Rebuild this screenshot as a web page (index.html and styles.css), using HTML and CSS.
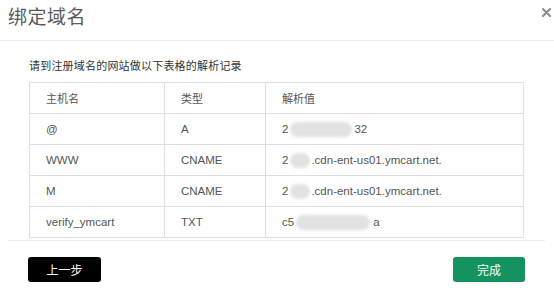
FILE: index.html
```html
<!DOCTYPE html>
<html lang="zh">
<head>
<meta charset="utf-8">
<link rel="stylesheet" href="styles.css">
</head>
<body>
<div class="dialog">
  <div class="header">
    <h1 class="title">绑定域名</h1>
    <svg class="close" width="9" height="9" viewBox="0 0 9 9"><path d="M1 1L8 8M8 1L1 8" stroke="#8a8a8a" stroke-width="2" stroke-linecap="round"/></svg>
  </div>
  <div class="content">
    <p class="intro">请到注册域名的网站做以下表格的解析记录</p>
    <table class="records">
      <tr><td class="c1">主机名</td><td class="c2">类型</td><td class="c3">解析值</td></tr>
      <tr><td>@</td><td>A</td><td>2<span class="blur b1"></span>32</td></tr>
      <tr><td>WWW</td><td>CNAME</td><td>2<span class="blur b2"></span>.cdn-ent-us01.ymcart.net.</td></tr>
      <tr><td>M</td><td>CNAME</td><td>2<span class="blur b2"></span>.cdn-ent-us01.ymcart.net.</td></tr>
      <tr><td>verify_ymcart</td><td>TXT</td><td>c5<span class="blur b3"></span>a</td></tr>
    </table>
  </div>
  <div class="divider"></div>
  <div class="footer">
    <button class="btn btn-back">上一步</button>
    <button class="btn btn-done">完成</button>
  </div>
</div>
</body>
</html>
```

FILE: styles.css
```css
html, body {
  margin: 0;
  padding: 0;
  background: #fff;
}
body {
  font-family: "Liberation Sans", "Noto Sans CJK SC", sans-serif;
  color: #555;
}
.dialog {
  width: 554px;
  height: 291px;
}
.header {
  height: 40px;
  border-bottom: 1px solid #ececec;
  display: flex;
  justify-content: space-between;
  align-items: flex-start;
  padding: 0 3px 0 8px;
}
.title {
  margin: 0;
  font-family: "Noto Sans CJK SC", sans-serif;
  font-weight: normal;
  font-size: 19px;
  line-height: 32px;
  color: #5a5a5a;
  letter-spacing: 0.5px;
}
.close {
  margin-top: 8px;
}
.content {
  padding: 0 30px 0 29px;
}
.intro {
  margin: 0;
  padding-top: 16px;
  font-family: "Noto Sans CJK SC", sans-serif;
  font-size: 11px;
  letter-spacing: 0.2px;
  line-height: 17px;
  color: #333;
}
.records {
  margin-top: 8px;
  width: 495px;
  border-collapse: collapse;
  font-size: 11.5px;
  color: #555;
}
.records td {
  border: 1px solid #dedede;
  height: 31px;
  padding: 0 0 0 16px;
  box-sizing: border-box;
  white-space: nowrap;
}
.records .c1 { width: 135px; }
.records .c2 { width: 101px; }
.records tr:first-child td {
  font-family: "Noto Sans CJK SC", sans-serif;
  font-size: 11px;
  color: #555;
}
.blur {
  display: inline-block;
  vertical-align: middle;
  height: 15px;
  background: #e2e2e2;
  border-radius: 8px;
  filter: blur(1.5px);
}
.b1 { width: 62px; margin: 0 2px 0 2px; }
.b2 { width: 20px; margin: 0 1px 0 2px; }
.b3 { width: 74px; margin: 0 3px 0 2px; }
.divider {
  margin: 2px 9px 0 8px;
  height: 1px;
  background: #ececec;
}
.footer {
  display: flex;
  justify-content: space-between;
  padding: 16px 29px 0 28px;
}
.btn {
  height: 25px;
  border: none;
  border-radius: 3px;
  font-family: "Noto Sans CJK SC", sans-serif;
  font-size: 12px;
  color: #fff;
  padding: 0;
}
.btn-back {
  width: 73px;
  background: #000;
}
.btn-done {
  width: 72px;
  background: #14925f;
}
```
